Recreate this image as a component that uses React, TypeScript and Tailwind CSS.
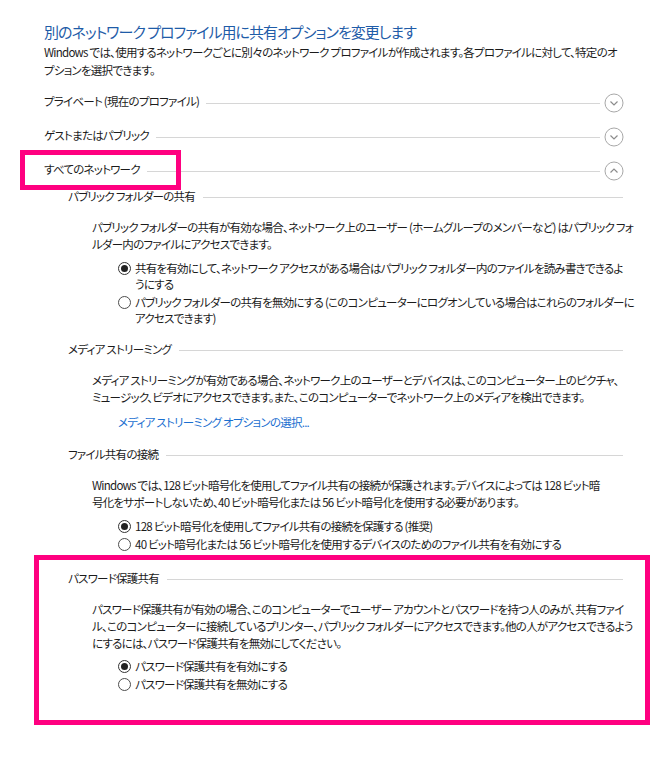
import React from "react";

const FONT = "[font-family:'Noto_Sans_CJK_JP','Noto_Sans',sans-serif]";
const T = "text-[11.5px] tracking-[-0.75px]";

function CircleChevron({ up }: { up?: boolean }) {
  return (
    <svg width="20" height="20" viewBox="0 0 20 20" className="shrink-0">
      <circle cx="10" cy="10" r="9" fill="none" stroke="#a8a8a8" strokeWidth="1" />
      {up ? (
        <polyline points="6.5,11.5 10,8 13.5,11.5" fill="none" stroke="#8c8c8c" strokeWidth="1.2" />
      ) : (
        <polyline points="6.5,8.5 10,12 13.5,8.5" fill="none" stroke="#8c8c8c" strokeWidth="1.2" />
      )}
    </svg>
  );
}

function ProfileRow({ label, up }: { label: string; up?: boolean }) {
  return (
    <div className="h-[34px] flex items-center">
      <span className={"whitespace-nowrap pb-[4px] leading-[16px] " + T}>{label}</span>
      <div className="flex-1 h-px bg-[#d6d6d6] ml-[7px] mr-[4px]" />
      <CircleChevron up={up} />
    </div>
  );
}

function SubHeader({ label }: { label: string }) {
  return (
    <div className="h-[20px] flex items-center">
      <span className={"whitespace-nowrap pb-[3px] leading-[16px] " + T}>{label}</span>
      <div className="flex-1 h-px bg-[#d6d6d6] ml-[8px] mr-[1px]" />
    </div>
  );
}

function Para({ lines, className = "" }: { lines: string[]; className?: string }) {
  return (
    <div className={"ml-[24px] leading-[17px] " + T + " " + className}>
      {lines.map((l, i) => (
        <div key={i} className="whitespace-nowrap">
          {l}
        </div>
      ))}
    </div>
  );
}

function Radio({ checked, lines }: { checked?: boolean; lines: string[] }) {
  return (
    <div className="flex items-start">
      <div className="w-[13px] h-[16px] flex items-center shrink-0">
        <div
          className={
            "w-[13px] h-[13px] rounded-full border flex items-center justify-center " +
            (checked ? "border-[#333333]" : "border-[#4d4d4d]")
          }
        >
          {checked && <div className="w-[7px] h-[7px] rounded-full bg-[#222222]" />}
        </div>
      </div>
      <div className={"ml-[4px] leading-[16px] " + T}>
        {lines.map((l, i) => (
          <div key={i} className="whitespace-nowrap">
            {l}
          </div>
        ))}
      </div>
    </div>
  );
}

export default function App() {
  return (
    <div
      className={
        "relative w-[669px] h-[757px] overflow-hidden bg-white text-[#1b1b1b] [font-feature-settings:'palt'] " +
        FONT
      }
    >
      <div className="pl-[44px] pr-[45px] pt-[21px]">
        <h1 className="text-[15px] tracking-[-1px] leading-[22px] text-[#1f5ca8] whitespace-nowrap">
          別のネットワーク プロファイル用に共有オプションを変更します
        </h1>
        <div className={"leading-[18px] " + T}>
          <div className="whitespace-nowrap">
            Windows では、使用するネットワークごとに別々のネットワーク プロファイルが作成されます。各プロファイルに対して、特定のオ
          </div>
          <div className="whitespace-nowrap">プションを選択できます。</div>
        </div>

        <div className="mt-[7px]">
          <ProfileRow label="プライベート (現在のプロファイル)" />
          <ProfileRow label="ゲストまたはパブリック" />
          <ProfileRow label="すべてのネットワーク" up />
        </div>

        <div className="ml-[24px] -mt-[1px]">
          <SubHeader label="パブリック フォルダーの共有" />
          <Para
            className="mt-[12px]"
            lines={[
              "パブリック フォルダーの共有が有効な場合、ネットワーク上のユーザー (ホームグループのメンバーなど) はパブリック フォ",
              "ルダー内のファイルにアクセスできます。",
            ]}
          />
          <div className="ml-[50px] mt-[7px] flex flex-col gap-[2px]">
            <Radio
              checked
              lines={[
                "共有を有効にして、ネットワーク アクセスがある場合はパブリック フォルダー内のファイルを読み書きできるよ",
                "うにする",
              ]}
            />
            <Radio
              lines={[
                "パブリック フォルダーの共有を無効にする (このコンピューターにログオンしている場合はこれらのフォルダーに",
                "アクセスできます)",
              ]}
            />
          </div>

          <div className="mt-[14px]">
            <SubHeader label="メディア ストリーミング" />
          </div>
          <Para
            className="mt-[12px]"
            lines={[
              "メディア ストリーミングが有効である場合、ネットワーク上のユーザーとデバイスは、このコンピューター上のピクチャ、",
              "ミュージック、ビデオにアクセスできます。また、このコンピューターでネットワーク上のメディアを検出できます。",
            ]}
          />
          <div className={"ml-[50px] mt-[8px] leading-[17px] text-[#1a6fd0] whitespace-nowrap " + T}>
            メディア ストリーミング オプションの選択...
          </div>

          <div className="mt-[14px]">
            <SubHeader label="ファイル共有の接続" />
          </div>
          <Para
            className="mt-[12px]"
            lines={[
              "Windows では、128 ビット暗号化を使用してファイル共有の接続が保護されます。デバイスによっては 128 ビット暗",
              "号化をサポートしないため、40 ビット暗号化または 56 ビット暗号化を使用する必要があります。",
            ]}
          />
          <div className="ml-[50px] mt-[7px] flex flex-col gap-[2px]">
            <Radio checked lines={["128 ビット暗号化を使用してファイル共有の接続を保護する (推奨)"]} />
            <Radio lines={["40 ビット暗号化または 56 ビット暗号化を使用するデバイスのためのファイル共有を有効にする"]} />
          </div>

          <div className="mt-[17px]">
            <SubHeader label="パスワード保護共有" />
          </div>
          <Para
            className="mt-[12px]"
            lines={[
              "パスワード保護共有が有効の場合、このコンピューターでユーザー アカウントとパスワードを持つ人のみが、共有ファイ",
              "ル、このコンピューターに接続しているプリンター、パブリック フォルダーにアクセスできます。他の人がアクセスできるよう",
              "にするには、パスワード保護共有を無効にしてください。",
            ]}
          />
          <div className="ml-[50px] mt-[6px] flex flex-col gap-[2px]">
            <Radio checked lines={["パスワード保護共有を有効にする"]} />
            <Radio lines={["パスワード保護共有を無効にする"]} />
          </div>
        </div>
      </div>

      <div className="absolute left-[20px] top-[150px] w-[161px] h-[40px] border-[5px] border-[#ff0080]" />
      <div className="absolute left-[34px] top-[555px] w-[616px] h-[170px] border-[5px] border-[#ff0080]" />
    </div>
  );
}
